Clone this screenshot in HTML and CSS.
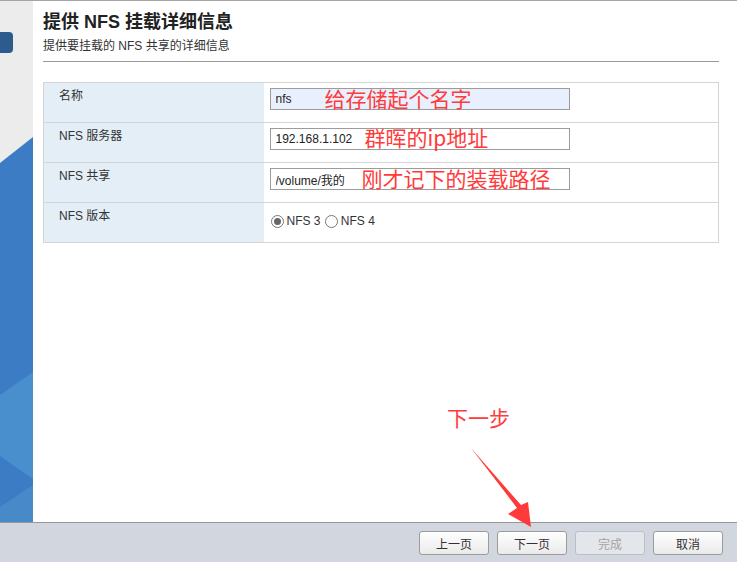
FILE: index.html
```html
<!DOCTYPE html>
<html lang="zh-CN">
<head>
<meta charset="utf-8">
<title>提供 NFS 挂载详细信息</title>
<link rel="stylesheet" href="styles.css">
</head>
<body>
<div class="window">
  <div class="main">
    <div class="side">
      <svg width="33" height="521" viewBox="0 0 33 521">
        <rect x="0" y="0" width="33" height="521" fill="#ececec"/>
        <rect x="-6" y="31" width="19" height="21" rx="4" fill="#2e5b8e"/>
        <polygon points="33,136 33,521 0,521 0,162" fill="#3b7cc4"/>
        <polygon points="33,371 0,394 0,455 33,478" fill="#4a8fcd"/>
        <polygon points="33,484 0,506 0,521 33,521" fill="#4789c9"/>
      </svg>
    </div>
    <div class="content">
      <h1 class="title">提供 NFS 挂载详细信息</h1>
      <p class="subtitle">提供要挂载的 NFS 共享的详细信息</p>
      <div class="rule"></div>
      <table class="form">
        <tr>
          <td class="label">名称</td>
          <td class="value">
            <input class="field autofill" type="text" value="nfs">
            <span class="note note-1">给存储起个名字</span>
          </td>
        </tr>
        <tr>
          <td class="label">NFS 服务器</td>
          <td class="value">
            <input class="field" type="text" value="192.168.1.102">
            <span class="note note-2">群晖的ip地址</span>
          </td>
        </tr>
        <tr>
          <td class="label">NFS 共享</td>
          <td class="value">
            <input class="field" type="text" value="/volume/我的">
            <span class="note note-3">刚才记下的装载路径</span>
          </td>
        </tr>
        <tr>
          <td class="label">NFS 版本</td>
          <td class="value radios">
            <label class="radio"><input type="radio" name="ver" checked><span>NFS 3</span></label>
            <label class="radio"><input type="radio" name="ver"><span>NFS 4</span></label>
          </td>
        </tr>
      </table>
    </div>
  </div>
  <div class="footer">
    <button class="btn">上一页</button>
    <button class="btn">下一页</button>
    <button class="btn" disabled>完成</button>
    <button class="btn">取消</button>
  </div>
  <span class="step-note">下一步</span>
  <svg class="arrow" width="737" height="562" viewBox="0 0 737 562">
    <polygon points="471,448 517,508 508,514 531,527 528,502 521,505" fill="#ff3a3a"/>
  </svg>
</div>
</body>
</html>
```

FILE: styles.css
```css
html, body {
  margin: 0;
  padding: 0;
}
body {
  width: 737px;
  height: 562px;
  overflow: hidden;
  background: #ffffff;
  font-family: "Liberation Sans", "Noto Sans CJK SC", sans-serif;
  color: #333;
}
.window {
  position: relative;
  width: 737px;
  height: 562px;
  display: flex;
  flex-direction: column;
}
.main {
  display: flex;
  height: 521px;
  border-top: 1px solid #a4a4a4;
}
.side {
  width: 33px;
  flex: none;
}
.side svg {
  display: block;
}
.content {
  flex: 1;
  padding: 9px 18px 0 10px;
  background: #fff;
}
.title {
  margin: 0;
  font-size: 18px;
  line-height: 24px;
  font-weight: bold;
  color: #222;
}
.subtitle {
  margin: 4px 0 0;
  font-size: 12px;
  line-height: 16px;
  color: #333;
}
.rule {
  margin-top: 7px;
  border-top: 1px solid #999;
}
.form {
  margin-top: 20px;
  width: 676px;
  border-collapse: collapse;
  table-layout: fixed;
}
.form td {
  border: 1px solid #d5d5d5;
  height: 40px;
  padding: 0;
  vertical-align: top;
  box-sizing: border-box;
}
.form tr td:first-child { border-right: none; }
.form tr td:last-child { border-left: none; }
.label {
  width: 220px;
  background: #e4eef6;
  font-size: 12px;
  line-height: 16px;
  padding: 5px 0 0 15px !important;
  color: #333;
}
.value {
  position: relative;
  padding: 5px 0 0 6px !important;
}
.field {
  display: block;
  box-sizing: border-box;
  width: 300px;
  height: 22px;
  margin: 0;
  border: 1px solid #9c9c9c;
  padding: 0 5px;
  font-family: "Liberation Sans", "Noto Sans CJK SC", sans-serif;
  font-size: 12px;
  color: #222;
  background: #fff;
  outline: none;
}
.field.autofill {
  background: #e8f0fe;
}
.note {
  position: absolute;
  font-family: "Noto Sans CJK SC", sans-serif;
  font-size: 21px;
  line-height: 21px;
  color: #ff3b3b;
  white-space: nowrap;
}
.note-1 { left: 61px; top: 5px; }
.note-2 { left: 101px; top: 4px; }
.note-3 { left: 98px; top: 5px; }
.radios {
  padding-top: 11px !important;
  font-size: 12px;
}
.radio {
  display: inline-flex;
  align-items: center;
  margin-right: 0;
  color: #333;
}
.radio input {
  appearance: none;
  -webkit-appearance: none;
  width: 13px;
  height: 13px;
  margin: 0 3px 0 1px;
  border: 1px solid #777;
  border-radius: 50%;
  background: #fff;
  box-sizing: border-box;
  position: relative;
}
.radio input:checked::after {
  content: "";
  position: absolute;
  left: 2px;
  top: 2px;
  width: 7px;
  height: 7px;
  border-radius: 50%;
  background: #666;
}
.footer {
  flex: 1;
  border-top: 1px solid #989898;
  background: #d2d6df;
  display: flex;
  justify-content: flex-end;
  align-items: flex-start;
  gap: 8px;
  padding: 8px 14px 0 0;
}
.btn {
  width: 70px;
  height: 24px;
  box-sizing: border-box;
  border: 1px solid #9c9c9c;
  border-radius: 3px;
  background: linear-gradient(#ffffff, #eaeaea);
  font-family: "Liberation Sans", "Noto Sans CJK SC", sans-serif;
  font-size: 12px;
  color: #333;
  padding: 0;
}
.btn:disabled {
  background: #e3e6eb;
  border-color: #babfc7;
  color: #a3a3a3;
}
.step-note {
  position: absolute;
  left: 447px;
  top: 407px;
  font-family: "Noto Sans CJK SC", sans-serif;
  font-size: 21px;
  line-height: 21px;
  color: #ff3b3b;
}
.arrow {
  position: absolute;
  left: 0;
  top: 0;
  pointer-events: none;
}
```
